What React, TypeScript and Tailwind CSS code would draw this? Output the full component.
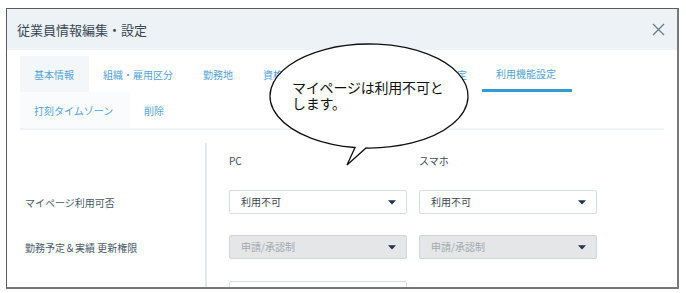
import React from "react";

const tabs = [
  { label: "基本情報", w: "w-[69px]", bg: "bg-[#f3f7fa]" },
  { label: "組織・雇用区分", w: "w-[100px]" },
  { label: "勤務地", w: "w-[60px]" },
  { label: "資格・スキル", w: "w-[100px]" },
  { label: "勤怠・休暇・申請設定", w: "w-[133px]", right: true },
  { label: "利用機能設定", w: "w-[90px]", active: true },
  { label: "打刻タイムゾーン", w: "w-[110px]", bg: "bg-[#f9fbfc]" },
  { label: "削除", w: "w-[50px]" },
];

const Arrow = () => (
  <svg width="8" height="5" viewBox="0 0 8 5">
    <path d="M0 0.3h8L4 4.6z" fill="#1f3352" />
  </svg>
);

const Select = ({ value, disabled }: { value: string; disabled?: boolean }) => (
  <div
    className={
      disabled
        ? "w-[178px] h-[24px] rounded-[2px] border border-[#cfd5da] bg-[#e4e6e8] text-[#a3aab1] flex items-center justify-between pl-[11px] pr-[10px]"
        : "w-[178px] h-[24px] rounded-[2px] border border-[#d3dde6] bg-white text-[#3b4653] flex items-center justify-between pl-[11px] pr-[10px]"
    }
  >
    <span className="text-[10px] leading-none">{value}</span>
    <Arrow />
  </div>
);

export default function App() {
  return (
    <div className="relative w-[686px] h-[293px] bg-white overflow-hidden pt-[8px] pl-[6px] font-['Noto_Sans_CJK_JP',sans-serif]">
      <div className="w-[673px] h-[281px] border-l border-t border-[#5c5c5c] border-r-2 border-b-2 border-r-[#787878] border-b-[#787878] overflow-hidden bg-white">
        {/* header */}
        <div className="h-[41px] bg-[#edf2f6] flex items-center justify-between pl-[10px] pr-[12px]">
          <span className="text-[13px] text-[#3a4757]">従業員情報編集・設定</span>
          <svg width="13" height="13" viewBox="0 0 13 13">
            <path d="M1 1l11 11M12 1L1 12" stroke="#6c7d8e" strokeWidth="1.4" />
          </svg>
        </div>

        <div className="px-[13px]">
          {/* tabs */}
          <div className="mt-[6px] flex flex-wrap border-b-2 border-[#eff2f4]">
            {tabs.map((t) => (
              <div
                key={t.label}
                className={`${t.w} h-[36px] flex items-center whitespace-nowrap overflow-hidden text-[10px] text-[#55a2d4] ${
                  t.right ? "justify-end pr-[15px]" : "pl-[14px]"
                } ${t.bg ?? ""} ${t.active ? "border-b-[3px] border-[#2f9ad4] pt-[2px]" : ""}`}
              >
                {t.label}
              </div>
            ))}
          </div>

          {/* form */}
          <div className="flex mt-[13px]">
            <div className="w-[187px] border-r-2 border-[#e2e9ef] h-[160px] pl-[5px] text-[10px] text-[#4a5a6b]">
              <div className="h-[47px]" />
              <div className="h-[24px] flex items-center">マイページ利用可否</div>
              <div className="h-[24px] mt-[21px] flex items-center">勤務予定＆実績 更新権限</div>
            </div>
            <div className="pl-[22px]">
              <div className="mt-[11px] h-[14px] flex gap-[12px] text-[10px] leading-[14px] text-[#3d4c5c]">
                <span className="w-[178px]">PC</span>
                <span>スマホ</span>
              </div>
              <div className="mt-[22px] flex gap-[12px]">
                <Select value="利用不可" />
                <Select value="利用不可" />
              </div>
              <div className="mt-[21px] flex gap-[12px]">
                <Select value="申請/承認制" disabled />
                <Select value="申請/承認制" disabled />
              </div>
              <div className="mt-[22px] flex gap-[12px]">
                <div className="w-[178px] h-[24px] rounded-[2px] border border-[#d3dde6] bg-white" />
              </div>
            </div>
          </div>
        </div>
      </div>

      {/* speech bubble */}
      <svg className="absolute left-0 top-0 pointer-events-none" width="686" height="293" viewBox="0 0 686 293">
        <path
          d="M355 147.5 A99 52 0 1 1 366 148 L347 165 Z"
          fill="white"
          stroke="#111"
          strokeWidth="1.3"
          strokeLinejoin="miter"
        />
      </svg>
      <div className="absolute left-[292px] top-[79px] text-[14px] leading-[16px] text-[#111] tracking-[-0.2px]">
        <div>マイページは利用不可と</div>
        <div>します。</div>
      </div>
    </div>
  );
}
